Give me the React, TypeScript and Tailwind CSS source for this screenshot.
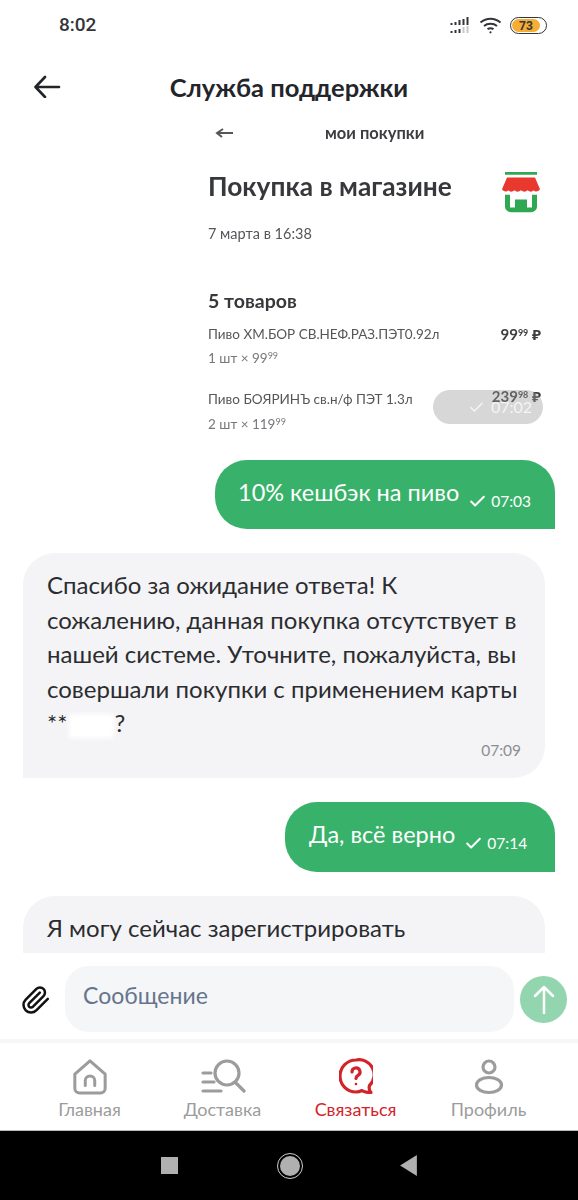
import { Check } from 'lucide-react'

const font = { fontFamily: 'Lato, "Noto Sans", sans-serif' }

function StatusBar() {
  return (
    <div className="flex h-[50px] items-center justify-between pl-[59px] pr-[31px] pt-[1px]">
      <span className="text-[19px] font-medium text-[#33353b]" style={{ fontFamily: 'Roboto, sans-serif' }}>8:02</span>
      <div className="flex items-center gap-[8px]">
        <svg width="21" height="18" viewBox="0 0 20 18">
          <g fill="#33353b">
            <rect x="0" y="6" width="2" height="2" /><rect x="4" y="5" width="2" height="3" />
            <rect x="8" y="3" width="2" height="5" /><rect x="12" y="2" width="2" height="6" />
            <rect x="16" y="0" width="2" height="8" /><rect x="0" y="14" width="2" height="2" />
            <rect x="4" y="13" width="2" height="3" /><rect x="8" y="12" width="2" height="4" />
          </g>
          <g fill="#c8c8c8">
            <rect x="12" y="10" width="2" height="6" /><rect x="16" y="9" width="2" height="7" />
          </g>
        </svg>
        <svg width="23" height="17" viewBox="0 0 22 17" fill="none" stroke="#33353b" strokeWidth="2">
          <path d="M1 5.500C7 .5 15 .5 21 5.500" />
          <path d="M4.500 9C8 6 14 6 17.500 9" />
          <path d="M8 12.200c1.800-1.200 4.200-1.200 6 0" />
          <circle cx="11" cy="15.300" r="1.100" fill="#33353b" stroke="none" />
        </svg>
        <div className="flex h-[17px] w-[37px] items-center rounded-full border border-[#33353b] p-[1px]">
          <div className="flex h-full w-[28px] items-center justify-center rounded-full bg-[#f5ad33] text-[12px] font-bold text-[#33353b]" style={{ fontFamily: 'Roboto, sans-serif' }}>73</div>
        </div>
      </div>
    </div>
  )
}

function Header() {
  return (
    <div className="relative flex h-[70px] shrink-0 items-center justify-center pt-[5px]">
      <svg className="absolute left-[32px] top-[24px]" width="30" height="24" viewBox="0 0 30 24" fill="none" stroke="#23252b" strokeWidth="2.600" strokeLinecap="round" strokeLinejoin="round">
        <path d="M27 13H4M13 3 3.500 13 13 23" />
      </svg>
      <span className="text-[25.500px] font-bold text-[#23252b]">Служба поддержки</span>
    </div>
  )
}

function Receipt() {
  return (
    <div className="relative ml-auto mr-[23px] h-[320px] w-[365px] shrink-0 overflow-hidden bg-white text-[#55565a]">
      <svg className="absolute left-[25px] top-[8px]" width="18" height="12" viewBox="0 0 18 12" fill="none" stroke="#55565a" strokeWidth="2">
        <path d="M18 5H3M8 1 2 5l5 4" />
      </svg>
      <div className="pl-[18px] pr-[14px] pt-[4px] blur-[0.4px]">
        <div className="pl-[117px] text-[16.500px] font-bold leading-[18px] text-[#3c3d40]">мои покупки</div>
        <div className="mt-[27px] flex items-start justify-between">
          <span className="mt-[2px] text-[26.300px] font-bold leading-[30px] text-[#37383b]">Покупка в магазине</span>
          <svg width="38" height="42" viewBox="0 0 38 46" preserveAspectRatio="none" className="mr-[1px] mt-[3px]">
            <rect x="3" y="0" width="32" height="3" fill="#2fa851" />
            <path d="M5 6h28l5 13c-2 3-5 3-6.300 1-1.400 2-4.300 2-6.200 0-1.600 2-4.500 2-6.500 0-2 2-4.900 2-6.500 0-1.900 2-4.800 2-6.200 0C5 22 2 22 0 19z" fill="#e9382d" />
            <path d="M3 25v13a6 6 0 0 0 6 6h20a6 6 0 0 0 6-6V25h-5v14h-5v-9H13v9H8V25z" fill="#2fa851" />
          </svg>
        </div>
        <div className="mt-[11px] text-[14.500px] leading-[18px]">7 марта в 16:38</div>
        <div className="mt-[47px] text-[19.500px] font-bold leading-[22px] text-[#37383b]">5 товаров</div>
        <div className="mt-[13px] flex justify-between text-[13.500px] leading-[18px]">
          <span>Пиво ХМ.БОР СВ.НЕФ.РАЗ.ПЭТ0.92л</span>
          <span className="text-[15px] font-bold text-[#3c3d40]">99<sup className="text-[9px]">99</sup> ₽</span>
        </div>
        <div className="mt-[6px] text-[13.500px] leading-[18px] text-[#77787c]">1 шт × 99<sup className="text-[9px]">99</sup></div>
        <div className="mt-[23px] flex justify-between text-[13.500px] leading-[18px]">
          <span>Пиво БОЯРИНЪ св.н/ф ПЭТ 1.3л</span>
          <span className="-mt-[3px] text-[15px] font-bold text-[#3c3d40]">239<sup className="text-[9px]">98</sup> ₽</span>
        </div>
        <div className="mt-[7px] text-[13.500px] leading-[18px] text-[#77787c]">2 шт × 119<sup className="text-[9px]">99</sup></div>
      </div>
      <div className="absolute right-[12px] top-[270px] flex h-[34px] w-[110px] items-center justify-end gap-[6px] rounded-full bg-[#9a9a9a]/40 pr-[11px] text-[16px] text-white/75">
        <Check size={17} strokeWidth={2} />
        <span>07:02</span>
      </div>
    </div>
  )
}

function OutBubble({ text, time, className }: { text: string; time: string; className: string }) {
  return (
    <div className={`ml-auto mr-[23px] flex shrink-0 items-center rounded-t-[32px] rounded-bl-[32px] bg-[#38b26a] text-white ${className}`}>
      <span className="mb-[5px] text-[23.500px] leading-[28px]">{text}</span>
      <Check size={19} strokeWidth={2.500} className="ml-[9px] mt-[13px]" />
      <span className="ml-[4px] mt-[13px] text-[15.500px] leading-[18px]">{time}</span>
    </div>
  )
}

function InBubble({ children, time }: { children: React.ReactNode; time?: string }) {
  return (
    <div className="ml-[23px] w-[522px] shrink-0 rounded-t-[32px] rounded-br-[32px] bg-[#f4f4f6] pl-[24px] pr-[24px] pt-[15px] pb-[19px] text-[24px] leading-[34.500px] text-[#2b2c30]">
      {children}
      {time && <div className="text-right text-[15.500px] leading-[18px] text-[#8d8e92]">{time}</div>}
    </div>
  )
}

function InputBar() {
  return (
    <div className="flex h-[90px] shrink-0 items-start border-b-[4px] border-[#f7f7f8] pl-[20px] pt-[13px]">
      <svg className="mt-[19px] shrink-0" width="32" height="30" viewBox="0 0 24 24" fill="none" stroke="#111" strokeWidth="2" strokeLinecap="round" strokeLinejoin="round">
        <path d="m21.440 11.050-9.190 9.190a6 6 0 0 1-8.490-8.490l8.570-8.570A4 4 0 1 1 18 8.840l-8.590 8.570a2 2 0 0 1-2.830-2.830l8.490-8.480" />
      </svg>
      <div className="ml-[13px] flex h-[66px] w-[449px] items-start rounded-[24px] bg-[#f5f6f8] pl-[18px] pt-[14px] text-[23px] leading-[30px] text-[#66748c]">Сообщение</div>
      <div className="ml-[6px] mt-[10px] flex h-[47px] w-[47px] items-center justify-center rounded-full bg-[#93d5ae]">
        <svg width="22" height="32" viewBox="0 0 22 32" fill="none" stroke="white" strokeWidth="2.500" strokeLinecap="round" strokeLinejoin="round">
          <path d="M11 29V3M2 12l9-9 9 9" />
        </svg>
      </div>
    </div>
  )
}

function NavItem({ label, active, children }: { label: string; active?: boolean; children: React.ReactNode }) {
  return (
    <div className={`flex w-[133px] flex-col items-center text-[18px] leading-[20px] ${active ? 'text-[#d3232a]' : 'text-[#9c9c9c]'}`}>
      <div className="flex h-[38px] items-center">{children}</div>
      <span className="mt-[3px]">{label}</span>
    </div>
  )
}

function BottomNav() {
  return (
    <div className="flex h-[87px] shrink-0 justify-center pt-[15px]">
      <NavItem label="Главная">
        <svg width="36" height="36" viewBox="0 0 36 38" fill="none" stroke="#9c9c9c" strokeWidth="3.200" strokeLinecap="round" strokeLinejoin="round">
          <path d="M2 16 18 2l16 14v15a5 5 0 0 1-5 5H7a5 5 0 0 1-5-5z" />
          <path d="M13 28v-5a5 5 0 0 1 10 0v5" />
        </svg>
      </NavItem>
      <NavItem label="Доставка">
        <svg width="46" height="36" viewBox="0 0 44 36" fill="none" stroke="#9c9c9c" strokeWidth="3.200" strokeLinecap="round">
          <circle cx="26" cy="14" r="12" />
          <path d="m35 24 8 8M2 14h8M2 23h11M2 32h18" />
        </svg>
      </NavItem>
      <NavItem label="Связаться" active>
        <svg width="34" height="38" viewBox="0 0 34 38" fill="none" stroke="#d3232a" strokeWidth="3.200" strokeLinecap="round" strokeLinejoin="round">
          <path d="M17 2a15 15 0 1 0 0 32c3 0 5-1 6-1.500 2 1.500 5 2 9 2-2-2-2-5-1.500-7A15 15 0 0 0 17 2z" />
          <path d="M13 14a4 4 0 1 1 6 3.400c-1.500 1-2 1.600-2 3.100" />
          <circle cx="17" cy="26" r="1.300" fill="#d3232a" stroke="none" />
        </svg>
      </NavItem>
      <NavItem label="Профиль">
        <svg width="30" height="36" viewBox="0 0 30 36" fill="none" stroke="#9c9c9c" strokeWidth="3.200">
          <circle cx="15" cy="8" r="6" />
          <ellipse cx="15" cy="26" rx="12.500" ry="7.500" />
        </svg>
      </NavItem>
    </div>
  )
}

function AndroidBar() {
  return (
    <div className="flex h-[70px] shrink-0 items-center justify-center border-t border-[#bbb] bg-black">
      <div className="h-[17px] w-[17px] bg-[#b0b0b0]" />
      <div className="ml-[99px] flex h-[26px] w-[26px] items-center justify-center rounded-full border-[1.500px] border-[#cfcfcf]">
        <div className="h-[20px] w-[20px] rounded-full bg-[#b0b0b0]" />
      </div>
      <svg className="ml-[97px]" width="17" height="21" viewBox="0 0 16 20"><path d="M16 0v20L0 10z" fill="#b0b0b0" /></svg>
    </div>
  )
}

export default function App() {
  return (
    <div className="flex h-[1200px] w-[578px] flex-col overflow-hidden bg-white" style={font}>
      <StatusBar />
      <Header />
      <div className="flex min-h-0 flex-1 flex-col overflow-hidden">
        <Receipt />
        <OutBubble text="10% кешбэк на пиво" time="07:03" className="mt-[20px] h-[69px] w-[340px] pl-[23px]" />
        <div className="mt-[24px] shrink-0">
          <InBubble time="07:09">
            Спасибо за ожидание ответа! К сожалению, данная покупка отсутствует в нашей системе. Уточните, пожалуйста, вы совершали покупки с применением карты<br />
            **<span className="ml-[2px] inline-block h-[24px] w-[45px] bg-white align-middle blur-[2px]" />?
          </InBubble>
        </div>
        <OutBubble text="Да, всё верно" time="07:14" className="mt-[24px] h-[70px] w-[270px] pl-[24px]" />
        <div className="mt-[24px] shrink-0">
          <InBubble>Я могу сейчас зарегистрировать<br />обращение на обработку</InBubble>
        </div>
      </div>
      <InputBar />
      <BottomNav />
      <AndroidBar />
    </div>
  )
}
